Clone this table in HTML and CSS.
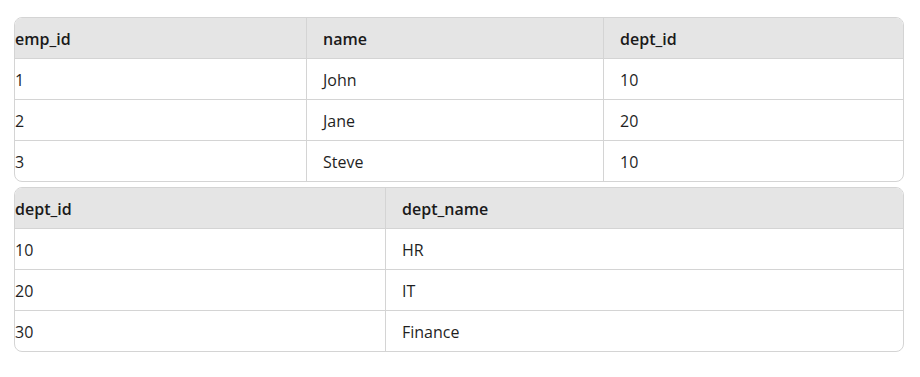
FILE: index.html
```html
<!DOCTYPE html>
<html>
<head>
<meta charset="utf-8">
<link rel="stylesheet" href="styles.css">
</head>
<body>
<div class="stack">
  <div class="tbl-wrap">
    <table class="tbl">
      <colgroup><col class="c-292"><col class="c-297"><col class="c-299"></colgroup>
      <thead>
        <tr><th>emp_id</th><th>name</th><th>dept_id</th></tr>
      </thead>
      <tbody>
        <tr><td>1</td><td>John</td><td>10</td></tr>
        <tr><td>2</td><td>Jane</td><td>20</td></tr>
        <tr><td>3</td><td>Steve</td><td>10</td></tr>
      </tbody>
    </table>
  </div>
  <div class="tbl-wrap">
    <table class="tbl">
      <colgroup><col class="c-371"><col class="c-517"></colgroup>
      <thead>
        <tr><th>dept_id</th><th>dept_name</th></tr>
      </thead>
      <tbody>
        <tr><td>10</td><td>HR</td></tr>
        <tr><td>20</td><td>IT</td></tr>
        <tr><td>30</td><td>Finance</td></tr>
      </tbody>
    </table>
  </div>
</div>
</body>
</html>
```
FILE: styles.css
```css
html, body {
  margin: 0;
  padding: 0;
  background: #ffffff;
}
body {
  font-family: "Open Sans", "Noto Sans", sans-serif;
  font-size: 16px;
  color: #1f1f1f;
}
.stack {
  display: flex;
  flex-direction: column;
  gap: 5px;
  padding: 17px 16px 0 14px;
}
.tbl-wrap {
  border: 1px solid #d4d4d4;
  border-radius: 8px;
  overflow: hidden;
  width: 888px;
}
.tbl {
  border-collapse: separate;
  border-spacing: 0;
  table-layout: fixed;
  width: 888px;
}
.c-292 { width: 292px; }
.c-297 { width: 297px; }
.c-299 { width: 299px; }
.c-371 { width: 371px; }
.c-517 { width: 517px; }
.tbl th, .tbl td {
  height: 39px;
  padding: 1px 16px 0;
  text-align: left;
  vertical-align: middle;
  border-right: 1px solid #d4d4d4;
  border-bottom: 1px solid #d4d4d4;
  box-sizing: content-box;
}
.tbl th:first-child, .tbl td:first-child {
  padding-left: 0;
}
.tbl th:last-child, .tbl td:last-child {
  border-right: none;
}
.tbl tbody tr:last-child td {
  border-bottom: none;
}
.tbl th {
  background: #e5e5e5;
  font-weight: 600;
  color: #1a1a1a;
}
```
